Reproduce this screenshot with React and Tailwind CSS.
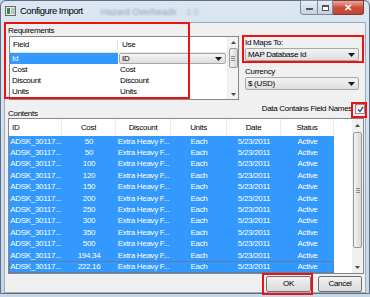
import React from "react";

const rows = ["50", "50", "100", "120", "150", "200", "250", "300", "350", "500", "194.34", "222.16"];
const cols = [
  { w: "w-[53px]", label: "ID", left: true },
  { w: "w-[54px]", label: "Cost" },
  { w: "w-[55px]", label: "Discount" },
  { w: "w-[56px]", label: "Units" },
  { w: "w-[54px]", label: "Date" },
  { w: "w-[53px]", label: "Status" },
];

function Tri({ dir = "down" }) {
  return (
    <svg width="7" height="4" viewBox="0 0 7 4" className={dir === "up" ? "rotate-180" : ""}>
      <path d="M0 0 H7 L3.5 4 Z" fill="#1a1a1a" />
    </svg>
  );
}

function SmallTri({ dir = "down" }) {
  return (
    <svg width="5" height="3" viewBox="0 0 5 3" className={dir === "up" ? "rotate-180" : ""}>
      <path d="M0 0 H5 L2.5 3 Z" fill="#4a4a4a" />
    </svg>
  );
}

function Combo({ text, className = "" }) {
  return (
    <div
      className={
        "flex items-center justify-between rounded-[2px] border border-[#a8a8a8] bg-gradient-to-b from-[#f4f4f4] to-[#dedede] pl-[2px] pr-[3px] text-[8px] leading-[10px] text-black " +
        className
      }
    >
      <span>{text}</span>
      <Tri />
    </div>
  );
}

function Grip() {
  return (
    <div className="flex flex-col gap-[1px]">
      <div className="h-px w-[4px] bg-[#8a8a8a]" />
      <div className="h-px w-[4px] bg-[#8a8a8a]" />
      <div className="h-px w-[4px] bg-[#8a8a8a]" />
    </div>
  );
}

function Cell({ w, children }) {
  return <div className={w + " flex justify-center overflow-hidden whitespace-nowrap"}>{children}</div>;
}

export default function App() {
  return (
    <div className="relative h-[297px] w-[370px] overflow-hidden bg-[#c9d6e3] font-['Liberation_Sans',Arial,sans-serif]">
      {/* window */}
      <div className="flex h-[294px] w-[370px] flex-col rounded-t-[6px] border border-[#5f6f82] bg-gradient-to-b from-[#dbe6f2] to-[#c6d7ea]">
        {/* title bar */}
        <div className="relative flex h-[21px] items-start">
          <div className="ml-[4px] mt-[5px] flex h-[10px] w-[11px] items-center border border-[#6b6b6b] bg-[#e9e9e9]">
            <div className="ml-[1px] h-[6px] w-[3px] bg-[#2d8f3c]" />
            <div className="ml-[1px] h-[6px] w-[4px] bg-[#b8c4cc]" />
          </div>
          <span className="ml-[4px] mt-[4px] whitespace-nowrap text-[9.5px] leading-[12px] tracking-[-0.5px] text-black">Configure Import</span>
          <span className="ml-[18px] mt-[5px] whitespace-nowrap text-[9px] leading-[12px] text-[#5a6b80] opacity-60 blur-[1.2px]">Hazard Overheads</span>
          <span className="ml-[10px] mt-[5px] text-[9px] leading-[12px] text-[#5a6b80] opacity-40 blur-[1.2px]">2.0</span>
          <div className="ml-auto mr-[5px] flex h-[15px] -mt-px">
            <div className="flex w-[18px] items-end justify-center rounded-bl-[3px] border border-[#7a8a9c] bg-gradient-to-b from-[#e8eef5] to-[#c3d1e0] pb-[4px]">
              <div className="h-[2px] w-[7px] border border-[#555] bg-white" />
            </div>
            <div className="flex w-[15px] items-center justify-center border-y border-r border-[#7a8a9c] bg-gradient-to-b from-[#e8eef5] to-[#c3d1e0]">
              <div className="h-[6px] w-[7px] border border-[#555] border-t-2 bg-white" />
            </div>
            <div className="flex w-[31px] items-center justify-center rounded-br-[3px] border-y border-r border-[#7a3a36] bg-gradient-to-b from-[#e8a89c] via-[#cc4f3e] to-[#c24535] text-[10px] font-bold leading-[10px] text-white">
              ✕
            </div>
          </div>
        </div>

        {/* client area */}
        <div className="mx-[3px] flex flex-1 flex-col border border-[#9aabbf] bg-[#f0f0f0] text-[8px] leading-[10px] tracking-[-0.3px] text-black">
          {/* top section */}
          <div className="flex pt-[3px]">
            <div className="ml-[3px] flex flex-col">
              <span className="h-[10px]">Requirements</span>
              {/* requirements table */}
              <div className="ml-[1px] flex h-[64px] w-[230px] border border-[#828790] bg-white">
                <div className="flex w-[218px] flex-col">
                  <div className="flex h-[16px] items-center border-b border-[#e5e5e5]">
                    <div className="w-[108px] border-r border-[#e0e0e0] pl-[3px]">Field</div>
                    <div className="pl-[4px]">Use</div>
                  </div>
                  <div className="flex h-[11px]">
                    <div className="flex w-[108px] items-center bg-[#3399ff] pl-[2px] text-white">Id</div>
                    <Combo text="ID" className="ml-[1px] h-[11px] w-[107px]" />
                  </div>
                  {["Cost", "Discount", "Units"].map((t) => (
                    <div key={t} className="flex h-[11px] items-center">
                      <div className="w-[108px] pl-[2px]">{t}</div>
                      <div className="pl-[2px]">{t}</div>
                    </div>
                  ))}
                </div>
                {/* scrollbar */}
                <div className="flex w-[11px] flex-col items-center border-l border-[#e8e8e8] bg-[#f3f3f3]">
                  <div className="flex h-[10px] items-center justify-center">
                    <SmallTri dir="up" />
                  </div>
                  <div className="mt-[1px] flex h-[20px] w-[9px] items-center justify-center rounded-[2px] border border-[#9a9a9a] bg-gradient-to-r from-[#f2f2f2] to-[#d8d8d8]">
                    <Grip />
                  </div>
                  <div className="flex-1" />
                  <div className="flex h-[10px] items-center justify-center">
                    <SmallTri />
                  </div>
                </div>
              </div>
            </div>
            <div className="ml-[6px] flex w-[114px] flex-col pt-[12px]">
              <span className="h-[10px]">Id Maps To:</span>
              <Combo text="MAP Database Id" className="h-[13px]" />
              <span className="mt-[6px] h-[10px]">Currency</span>
              <Combo text="$ (USD)" className="h-[13px]" />
            </div>
          </div>

          {/* contents label row */}
          <div className="flex h-[18px] items-start">
            <span className="ml-[3px] mt-[9px] h-[9px] leading-[9px]">Contents</span>
            <div className="ml-auto mr-0 mt-[4px] flex items-center gap-[3px]">
              <span className="whitespace-nowrap">Data Contains Field Names</span>
              <div className="flex h-[10px] w-[10px] items-center justify-center border border-[#8e8f8f] bg-gradient-to-br from-[#e6e6e6] to-white">
                <svg width="7" height="7" viewBox="0 0 7 7">
                  <path d="M1 3.5 L3 5.5 L6.2 0.8" stroke="#2a4a8a" strokeWidth="1.3" fill="none" />
                </svg>
              </div>
            </div>
          </div>

          {/* contents grid */}
          <div className="ml-[3px] flex h-[156px] w-[356px] border border-[#828790] bg-white">
            <div className="flex w-[343px] flex-col">
              <div className="flex h-[17px] items-center">
                {cols.map((c) => (
                  <div
                    key={c.label}
                    className={c.w + " flex h-full items-center border-r border-[#ececec] " + (c.left ? "pl-[3px]" : "justify-center")}
                  >
                    {c.label}
                  </div>
                ))}
              </div>
              {rows.map((v, i) => (
                <div
                  key={i}
                  className={
                    "flex h-[11.4px] w-[325px] items-center bg-[#3399ff] text-white " +
                    (i === rows.length - 1 ? "outline outline-1 -outline-offset-1 outline-[#5b7ea8]" : "")
                  }
                >
                  <Cell w="w-[53px]">ADSK_30117...</Cell>
                  <Cell w="w-[54px]">{v}</Cell>
                  <Cell w="w-[55px]">Extra Heavy F...</Cell>
                  <Cell w="w-[56px]">Each</Cell>
                  <Cell w="w-[54px]">5/23/2011</Cell>
                  <Cell w="w-[53px]">Active</Cell>
                </div>
              ))}
            </div>
            {/* scrollbar */}
            <div className="flex w-[11px] flex-col items-center bg-[#f0f0f0]">
              <div className="flex h-[12px] items-center justify-center">
                <SmallTri dir="up" />
              </div>
              <div className="mt-[1px] flex h-[116px] w-[9px] items-center justify-center rounded-[2px] border border-[#9a9a9a] bg-gradient-to-r from-[#f2f2f2] to-[#d8d8d8]">
                <Grip />
              </div>
              <div className="flex-1" />
              <div className="flex h-[12px] items-center justify-center">
                <SmallTri />
              </div>
            </div>
          </div>

          {/* buttons */}
          <div className="mt-[2px] flex justify-end gap-[7px] pr-[3px]">
            <div className="flex h-[16px] w-[45px] items-center justify-center rounded-[2px] border border-[#707070] bg-gradient-to-b from-[#f2f2f2] to-[#dadada]">OK</div>
            <div className="flex h-[16px] w-[44px] items-center justify-center rounded-[2px] border border-[#707070] bg-gradient-to-b from-[#f2f2f2] to-[#dadada]">Cancel</div>
          </div>
        </div>
      </div>

      {/* red annotation boxes */}
      <div className="pointer-events-none absolute left-[4px] top-[22px] h-[77px] w-[186px] border-2 border-[#ee1111]" />
      <div className="pointer-events-none absolute left-[242px] top-[35px] h-[28px] w-[122px] border-2 border-[#ee1111]" />
      <div className="pointer-events-none absolute left-[351px] top-[102px] h-[16px] w-[16px] border-2 border-[#ee1111]" />
      <div className="pointer-events-none absolute left-[262px] top-[273px] h-[22px] w-[51px] border-2 border-[#ee1111]" />
    </div>
  );
}
